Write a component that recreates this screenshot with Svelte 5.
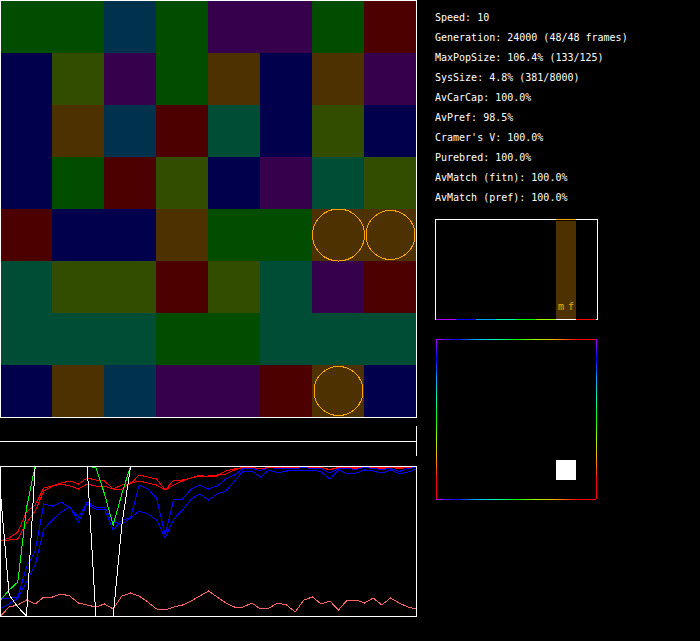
<script>
  const hues = {
    P: [180, 0, 255],
    B: [0, 0, 255],
    A: [0, 165, 255],
    T: [0, 255, 180],
    G: [0, 255, 0],
    L: [165, 255, 0],
    O: [255, 165, 0],
    R: [255, 0, 0]
  };
  const order = ['P', 'B', 'A', 'T', 'G', 'L', 'O', 'R'];
  const bright = (k) => `rgb(${hues[k].join(',')})`;
  const dark = (k) => `rgb(${hues[k].map((c) => Math.round(c * 0.3)).join(',')})`;

  const board = [
    'GGAGPPGR',
    'BLPGOBOP',
    'BOARTBLB',
    'BGRLBPTL',
    'RBBOGGOO',
    'TLLRLTPR',
    'TTTGGTTT',
    'BOAPPROB'
  ];
  const circles = [
    { x: 338, y: 234, r: 26 },
    { x: 390, y: 234, r: 24.5 },
    { x: 338, y: 390, r: 24.5 }
  ];

  const stats = [
    ['Speed', '10'],
    ['Generation', '24000 (48/48 frames)'],
    ['MaxPopSize', '106.4% (133/125)'],
    ['SysSize', '4.8% (381/8000)'],
    ['AvCarCap', '100.0%'],
    ['AvPref', '98.5%'],
    ["Cramer's V", '100.0%'],
    ['Purebred', '100.0%'],
    ['AvMatch (fitn)', '100.0%'],
    ['AvMatch (pref)', '100.0%']
  ];

  const fill = (n, v = 0) => Array(n).fill(v);
  const series = [
    {
      color: '#ff6464',
      data: [150, 141, 139, 134, 138, 131, 131, 128, 130, 137, 139, 141, 138, 143, 130, 127, 130, 136, 143, 144, 141, 139, 135, 130, 125, 131, 137, 141, 141, 137, 143, 142, 137, 139, 146, 134, 131, 138, 135, 144, 134, 134, 137, 132, 139, 132, 137, 141, 143]
    },
    {
      color: '#0000ff',
      data: [132, 132, 131, 101, 85, 38, 40, 36, 42, 51, 36, 41, 41, 56, 58, 52, 19, 23, 32, 69, 33, 33, 23, 19, 23, 20, 13, 9, 2.5, 2.5, 4.5, 1.5, 2.5, 2.5, 2.5, 1.5, 2.5, 2.5, 7, 2.5, 2.5, 3.5, 1.5, 2.5, 3.5, 2.5, 5.5, 2.5, 1.5]
    },
    {
      color: '#0000ff',
      data: [142, 138, 132, 116, 99, 63, 54, 46, 41, 56, 38, 43, 43, 64, 54, 52, 45, 48, 54, 72, 53, 44, 33, 28, 34, 28, 25, 15, 5, 5, 11, 4, 7, 5, 4, 4, 4, 6, 13, 4, 8, 7, 4, 5, 7, 4, 8, 6, 3]
    },
    {
      color: '#ff0000',
      data: [75, 72, 66, 46, 39, 22, 20, 17, 15, 18, 12, 14, 15, 23, 19, 18, 9, 11, 13, 24, 14, 14, 12, 9, 11, 10, 5, 3, 1.5, 1.5, 3, 1.5, 1.5, 1.5, 1.5, 0.5, 1.5, 1.5, 3.5, 1.5, 1.5, 1.5, 0.5, 1.5, 2.5, 1.5, 2.5, 1.5, 0.5]
    },
    {
      color: '#ff0000',
      data: [75, 74, 73, 57, 45, 25, 20, 18, 20, 23, 18, 20, 20, 23, 23, 17, 15, 17, 19, 24, 19, 15, 12, 10, 10, 9, 8, 4, 1.5, 1.5, 2.5, 1.5, 2, 1.5, 1.5, 0.5, 1.5, 1.5, 4, 1.5, 1.5, 2.5, 0.5, 1.5, 1.5, 1.5, 1.5, 1.5, 0.5]
    },
    {
      color: '#00ff00',
      data: [134, 124, 116, 42, ...fill(6), 0.5, 1.5, 28, 59, 28, ...fill(34)]
    },
    {
      color: '#ffffff',
      data: [27, 129, 141, 150, ...fill(7), 150, 150, 150, 59, 1, ...fill(33)]
    }
  ];
  const step = 416 / 48;
  const points = (data) => data.map((v, i) => `${(i * step + 0.5).toFixed(2)},${v}`).join(' ');
</script>

<main>
  <div class="world">
    <svg class="board" viewBox="0 0 417 418" role="img" aria-label="Habitat grid">
      {#each board as row, r}
        {#each row.split('') as cell, c}
          <rect x={c * 52} y={r * 52 + 1} width="52" height="52" fill={dark(cell)} />
        {/each}
      {/each}
      {#each circles as o}
        <circle cx={o.x + 0.5} cy={o.y + 1} r={o.r} fill="none" stroke={bright('O')} />
      {/each}
      <rect x="0.5" y="0.5" width="416" height="417" fill="none" stroke="#fff" />
    </svg>

    <div class="timeline"><span></span></div>

    <svg class="history" viewBox="0 0 417 151" role="img" aria-label="History of the run">
      {#each series as s}
        <polyline points={points(s.data)} fill="none" stroke={s.color} />
      {/each}
      <rect x="0.5" y="0.5" width="416" height="150" fill="none" stroke="#fff" />
    </svg>
  </div>

  <aside>
    <ul>
      {#each stats as [name, value]}
        <li>{name}: {value}</li>
      {/each}
    </ul>

    <svg class="bars" viewBox="0 0 163 101" role="img" aria-label="Males and females by type">
      <rect x="0.5" y="0.5" width="162" height="100" fill="none" stroke="#fff" />
      {#each order as k, i}
        <rect x={1 + i * 20} y="100" width="20" height="1" fill={k === 'O' ? '#fff' : bright(k)} />
      {/each}
      <rect x="121" y="2" width="20" height="98" fill={dark('O')} />
      <rect x="121" y="0" width="20" height="1" fill={bright('O')} />
      <text x="123" y="91" fill={bright('O')}>m</text>
      <text x="133" y="91" fill={bright('O')}>f</text>
    </svg>

    <svg class="matrix" viewBox="0 0 161 161" role="img" aria-label="Preference matrix">
      <defs>
        <linearGradient id="across" gradientUnits="userSpaceOnUse" x1="0" y1="0" x2="160" y2="0">
          {#each order as k, i}
            <stop offset={i / 8} stop-color={bright(k)} />
          {/each}
        </linearGradient>
        <linearGradient id="down" gradientUnits="userSpaceOnUse" x1="0" y1="0" x2="0" y2="160">
          {#each order as k, i}
            <stop offset={i / 8} stop-color={bright(k)} />
          {/each}
        </linearGradient>
      </defs>
      <rect width="160" height="1" fill="url(#across)" />
      <rect y="160" width="160" height="1" fill="url(#across)" />
      <rect width="1" height="160" fill="url(#down)" />
      <rect x="160" width="1" height="160" fill="url(#down)" />
      <rect x="120" y="121" width="20" height="20" fill="#fff" />
    </svg>
  </aside>
</main>

<style>
  :global(body) {
    background: #000;
  }

  main {
    display: flex;
    align-items: flex-start;
    gap: 18px;
    min-height: 100vh;
    background: #000;
    color: #fff;
    font: 10px/20px 'DejaVu Sans Mono', 'Liberation Mono', monospace;
  }

  .world {
    flex: 0 1 417px;
    min-width: 0;
  }

  svg {
    display: block;
    shape-rendering: crispEdges;
  }

  .board,
  .history {
    width: 100%;
    height: auto;
  }

  .timeline {
    box-sizing: border-box;
    height: 30px;
    margin: 8px 0 10px;
    padding-top: 15px;
    border-right: 1px solid #fff;
  }

  .timeline span {
    display: block;
    height: 1px;
    background: #fff;
  }

  aside {
    flex: 0 0 auto;
    padding-top: 8px;
  }

  ul {
    margin: 0 0 11px;
    padding: 0;
    list-style: none;
  }

  .bars {
    width: 163px;
    height: 101px;
    margin-bottom: 19px;
  }

  .matrix {
    width: 161px;
    height: 161px;
    margin-left: 1px;
  }
</style>
